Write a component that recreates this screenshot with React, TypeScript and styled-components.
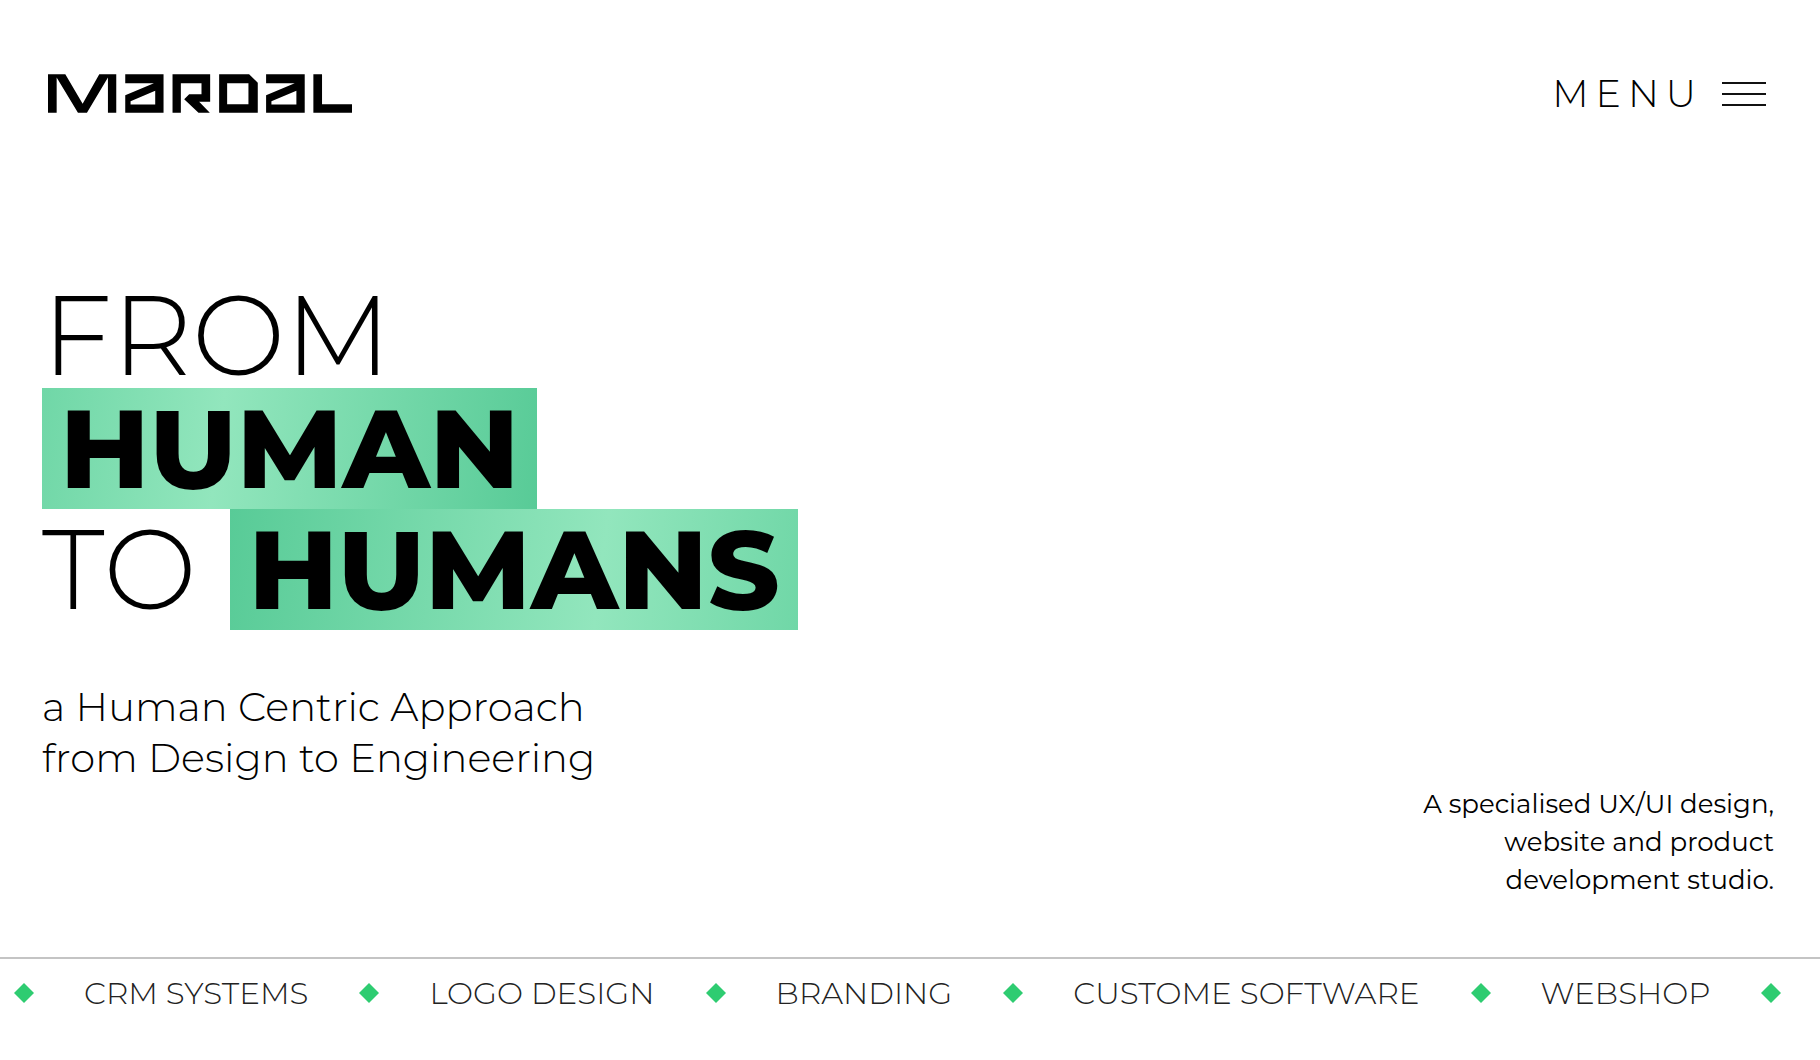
import React from 'react';
import styled, { createGlobalStyle } from 'styled-components';

const GlobalStyle = createGlobalStyle`
  *, *::before, *::after { box-sizing: border-box; }
  body {
    margin: 0;
    background: #fff;
    color: #000;
    font-family: Montserrat, "Open Sans", sans-serif;
  }
`;

const Page = styled.div`
  display: flex;
  flex-direction: column;
  min-height: 100vh;
  overflow: hidden;
`;

const Header = styled.header`
  display: flex;
  align-items: center;
  justify-content: space-between;
  padding: 70px 54px 0 48px;
`;

const LogoLink = styled.a`
  display: block;
  color: inherit;
  svg { display: block; }
`;

const MenuButton = styled.button`
  display: flex;
  align-items: center;
  gap: 19px;
  padding: 0;
  border: 0;
  background: none;
  color: #000;
  font: 300 38px/47px Montserrat, "Open Sans", sans-serif;
  letter-spacing: 7px;
  cursor: pointer;
`;

const Bars = styled.span`
  display: flex;
  flex-direction: column;
  gap: 9px;
  width: 44px;
`;

const Bar = styled.span`
  height: 2px;
  background: #111;
`;

const Main = styled.main`
  display: flex;
  flex: 1;
  flex-direction: column;
  padding: 167px 46px 58px 42px;
`;

const Title = styled.h1`
  display: flex;
  flex-direction: column;
  align-items: flex-start;
  margin: 0;
  font-size: 111px;
  font-weight: 300;
  line-height: 121px;
`;

const FirstLine = styled.span`
  line-height: 104px;
`;

const Line = styled.span`
  display: flex;
  gap: 34px;
`;

const Highlight = styled.strong<{ $reverse?: boolean }>`
  padding: 0 18px;
  font-weight: 800;
  background: ${p => p.$reverse
    ? 'linear-gradient(97deg, #58cb97 0%, #92e6bd 65%, #70d7a7 100%)'
    : 'linear-gradient(97deg, #70d7a7 0%, #92e6bd 36%, #58cb97 100%)'};
`;

const Subtitle = styled.p`
  margin: 51px 0 0;
  font-size: 40px;
  font-weight: 300;
  line-height: 51px;
`;

const Intro = styled.p`
  align-self: flex-end;
  width: 352px;
  margin: auto 0 0;
  font-size: 26px;
  line-height: 38px;
  text-align: right;
`;

const Services = styled.footer`
  border-top: 2px solid #c4c4c4;
  padding: 16px 14px 49px;
`;

const Track = styled.ul`
  display: flex;
  align-items: center;
  gap: 51px;
  margin: 0;
  padding: 0;
  list-style: none;
  white-space: nowrap;
`;

const Service = styled.li`
  display: flex;
  align-items: center;
  gap: 50px;
  color: #222;
  font-size: 31px;
  font-weight: 300;
  line-height: 36px;
`;

const services = ['CRM SYSTEMS', 'LOGO DESIGN', 'BRANDING', 'CUSTOME SOFTWARE', 'WEBSHOP'];

function Diamond() {
  return (
    <svg width="20" height="20" viewBox="0 0 20 20" aria-hidden="true">
      <path d="M10 0 20 10 10 20 0 10Z" fill="#2ecc71" />
    </svg>
  );
}

function Logo() {
  return (
    <svg width="304" height="39" viewBox="0 0 913 116" fill="currentColor" fillRule="evenodd" aria-hidden="true">
      <path d="M0 0H52L104 89 154 0H205V116H180V10L117 116H90L26 10V116H0Z" />
      <path d="M232 0H347V116H232V63L318 27H232ZM322 50 248 81V91H322Z" />
      <path d="M374 0H487V83H454L486 116H452L409 75 424 60H461V27H399V116H374Z" />
      <path d="M514 0H604L630 26V116H514ZM538 27V90H602V27Z" />
      <path d="M655 0H771V116H655V63L741 27H655ZM746 50 671 81V91H746Z" />
      <path d="M797 0H823V90H913V116H797Z" />
    </svg>
  );
}

export default function App() {
  return (
    <Page>
      <GlobalStyle />
      <Header>
        <LogoLink href="#" aria-label="Mardal"><Logo /></LogoLink>
        <MenuButton type="button">
          MENU
          <Bars aria-hidden="true"><Bar /><Bar /><Bar /></Bars>
        </MenuButton>
      </Header>
      <Main>
        <Title>
          <FirstLine>FROM</FirstLine>
          <Highlight>HUMAN</Highlight>
          <Line>TO <Highlight $reverse>HUMANS</Highlight></Line>
        </Title>
        <Subtitle>a Human Centric Approach<br />from Design to Engineering</Subtitle>
        <Intro>A specialised UX/UI design, website and product development studio.</Intro>
      </Main>
      <Services>
        <Track>
          {services.map(name => (
            <Service key={name}><Diamond />{name}</Service>
          ))}
          <Service><Diamond /></Service>
        </Track>
      </Services>
    </Page>
  );
}
